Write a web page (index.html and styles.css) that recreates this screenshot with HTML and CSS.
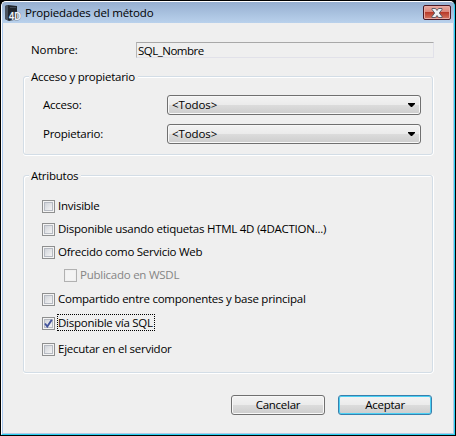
FILE: index.html
```html
<!DOCTYPE html>
<html lang="es">
<head>
<meta charset="utf-8">
<title>Propiedades del método</title>
<link rel="stylesheet" href="styles.css">
</head>
<body>
<div class="window">
  <header class="titlebar">
    <svg class="app-icon" width="17" height="17" viewBox="0 0 17 17">
      <path d="M0 1 3 0 12 1V14L4 16 0 14Z" fill="#20252c"/>
      <path d="M0 1 3 0V15.500L0 14Z" fill="#49515d"/>
      <path d="M5 2.500h6" stroke="#424b57"/>
      <text class="app-mark" x="4" y="15" textLength="12" lengthAdjust="spacingAndGlyphs">4D</text>
    </svg>
    <h1 class="title">Propiedades del método</h1>
    <button class="close" aria-label="Cerrar">
      <svg width="12" height="10" viewBox="0 0 12 10">
        <path d="M1 .5h3.500L6 2.500 7.500 .5H11v1L8.300 5 11 8.500v1H7.500L6 7.500 4.500 9.500H1v-1L3.700 5 1 1.500Z" fill="#f0f2f4" stroke="#4f5361" stroke-width=".9"/>
      </svg>
    </button>
  </header>
  <main class="content">
    <div class="name-row">
      <span class="name-label">Nombre:</span>
      <span class="name-field">SQL_Nombre</span>
    </div>
    <section class="group access">
      <h2 class="legend">Acceso y propietario</h2>
      <div class="row"><span class="row-label">Acceso:</span><div class="combo"><span>&lt;Todos&gt;</span><svg width="7" height="4" viewBox="0 0 7 4"><path d="M0 0h7v1L4 4H3L0 1Z"/></svg></div></div>
      <div class="row"><span class="row-label">Propietario:</span><div class="combo"><span>&lt;Todos&gt;</span><svg width="7" height="4" viewBox="0 0 7 4"><path d="M0 0h7v1L4 4H3L0 1Z"/></svg></div></div>
    </section>
    <section class="group attributes">
      <h2 class="legend attr-legend">Atributos</h2>
      <div class="check"><i class="box"></i><span>Invisible</span></div>
      <div class="check"><i class="box"></i><span>Disponible usando etiquetas HTML 4D (4DACTION...)</span></div>
      <div class="check"><i class="box"></i><span>Ofrecido como Servicio Web</span></div>
      <div class="check disabled"><i class="box"></i><span>Publicado en WSDL</span></div>
      <div class="check shared"><i class="box"></i><span>Compartido entre componentes y base principal</span></div>
      <div class="check sql"><i class="box"><svg width="9" height="9" viewBox="0 0 9 9"><path d="M1 4.500 3.300 7.500 7.800 .8" fill="none" stroke="#42539c" stroke-width="1.900"/></svg></i><span class="focused">Disponible vía SQL</span></div>
      <div class="check server"><i class="box"></i><span>Ejecutar en el servidor</span></div>
    </section>
    <footer class="actions">
      <button class="button">Cancelar</button>
      <button class="button primary">Aceptar</button>
    </footer>
  </main>
</div>
</body>
</html>
```
FILE: styles.css
```css
* { box-sizing: border-box; }
body {
  margin: 0;
  background: #000;
  font: 11.5px/16px "Open Sans", "Noto Sans", sans-serif;
  letter-spacing: -.25px;
  color: #000;
}
h1, h2 { margin: 0; font: inherit; }
button { font: inherit; letter-spacing: inherit; color: inherit; padding: 0; }
svg { display: block; }
span, h1, h2 { white-space: nowrap; }
.window {
  width: 454px;
  height: 434px;
  margin: 1px 0 0 1px;
  background: #efefef;
  border: 1px solid #fff;
  border-right-color: #28d0f2;
  border-bottom-color: #28d0f2;
  border-radius: 5px 5px 0 0;
  box-shadow: inset 1px 0 #a9c7ed, inset -1px -1px #b0c9e5;
  overflow: hidden;
}
.titlebar {
  height: 21px;
  display: flex;
  align-items: center;
  padding: 0 3px;
  background: linear-gradient(#96afd0, #b9d1ec);
}
.app-icon { margin-top: 1px; }
.app-mark {
  font: bold 10px "Liberation Sans", sans-serif;
  letter-spacing: 0;
  fill: #eef2f6;
  stroke: #4c5562;
  stroke-width: .5px;
  paint-order: stroke;
}
.title { margin-left: 3px; letter-spacing: -.15px; }
.close {
  display: grid;
  place-items: center;
  width: 28px;
  height: 15px;
  margin-left: auto;
  border: 1px solid #4b1822;
  border-radius: 2px;
  background: linear-gradient(#e8aaa0 0, #d98478 48%, #b93b2a 50%, #d57863);
  box-shadow: inset 0 0 0 1px #e7aaa4;
}
.content { padding: 19px 21px 0 21px; }
.name-row { display: flex; height: 16px; }
.name-label { flex: none; width: 113px; padding-left: 8px; letter-spacing: -.1px; }
.name-field {
  flex: none;
  width: 298px;
  height: 16px;
  padding-left: 1px;
  border: 1px solid #e1e1e9;
  border-top-color: #a8a8a8;
  border-left-color: #b6b6b6;
  line-height: 15px;
  letter-spacing: -.5px;
}
.group {
  border: 1px solid #d3dde6;
  border-radius: 3px;
  box-shadow: 0 1px #fff, inset 1px 1px #fff, 1px 0 #fff;
}
.access { height: 79px; margin-top: 18px; }
.legend {
  width: max-content;
  height: 16px;
  margin: -8px 0 0 5px;
  padding: 0 3px 0 2px;
  background: #efefef;
}
.row { display: flex; height: 20px; margin: 10px 11px 9px 19px; }
.row + .row { margin-top: 0; }
.row-label { width: 124px; line-height: 20px; }
.combo {
  flex: 1;
  display: flex;
  align-items: center;
  justify-content: space-between;
  padding: 0 5px 0 4px;
  letter-spacing: -.1px;
}
.combo, .button {
  border: 1px solid #707070;
  border-radius: 3px;
  background: linear-gradient(#f3f3f3 0, #ebebeb 48%, #dcdcdc 50%, #cdcdcd);
  box-shadow: inset 0 0 0 1px #f8f8f8;
}
.attributes { height: 198px; margin-top: 20px; }
.attr-legend { margin-bottom: 14px; }
.check {
  display: flex;
  align-items: center;
  height: 16px;
  margin: 0 0 7px 18px;
}
.box {
  flex: none;
  display: grid;
  place-items: center;
  width: 13px;
  height: 13px;
  margin: 1px 3px 0 0;
  border: 1px solid #8e8f8f;
  background: linear-gradient(135deg, #c7cbd2, #f6f6f6 85%) padding-box;
  box-shadow: inset 0 0 0 1px #f4f4f4, inset 0 0 0 2px #b6bac2;
}
.disabled { margin-left: 40px; color: #858585; }
.disabled .box { border-color: #b1b1b1; background: #f4f4f4; box-shadow: inset 0 0 0 1px #f0f0f0; }
.disabled, .shared { margin-bottom: 8px; }
.sql { margin-bottom: 10px; }
.focused { position: relative; }
.focused::after {
  content: "";
  position: absolute;
  inset: -1px -2px 0 -1px;
  border: 1px dotted #000;
}
.actions { display: flex; justify-content: flex-end; gap: 13px; margin: 22px 1px 0 0; }
.button { width: 94px; height: 20px; line-height: 18px; }
.primary { border-color: #397fac; box-shadow: inset 0 0 0 1px #4bd0f4; }
```
